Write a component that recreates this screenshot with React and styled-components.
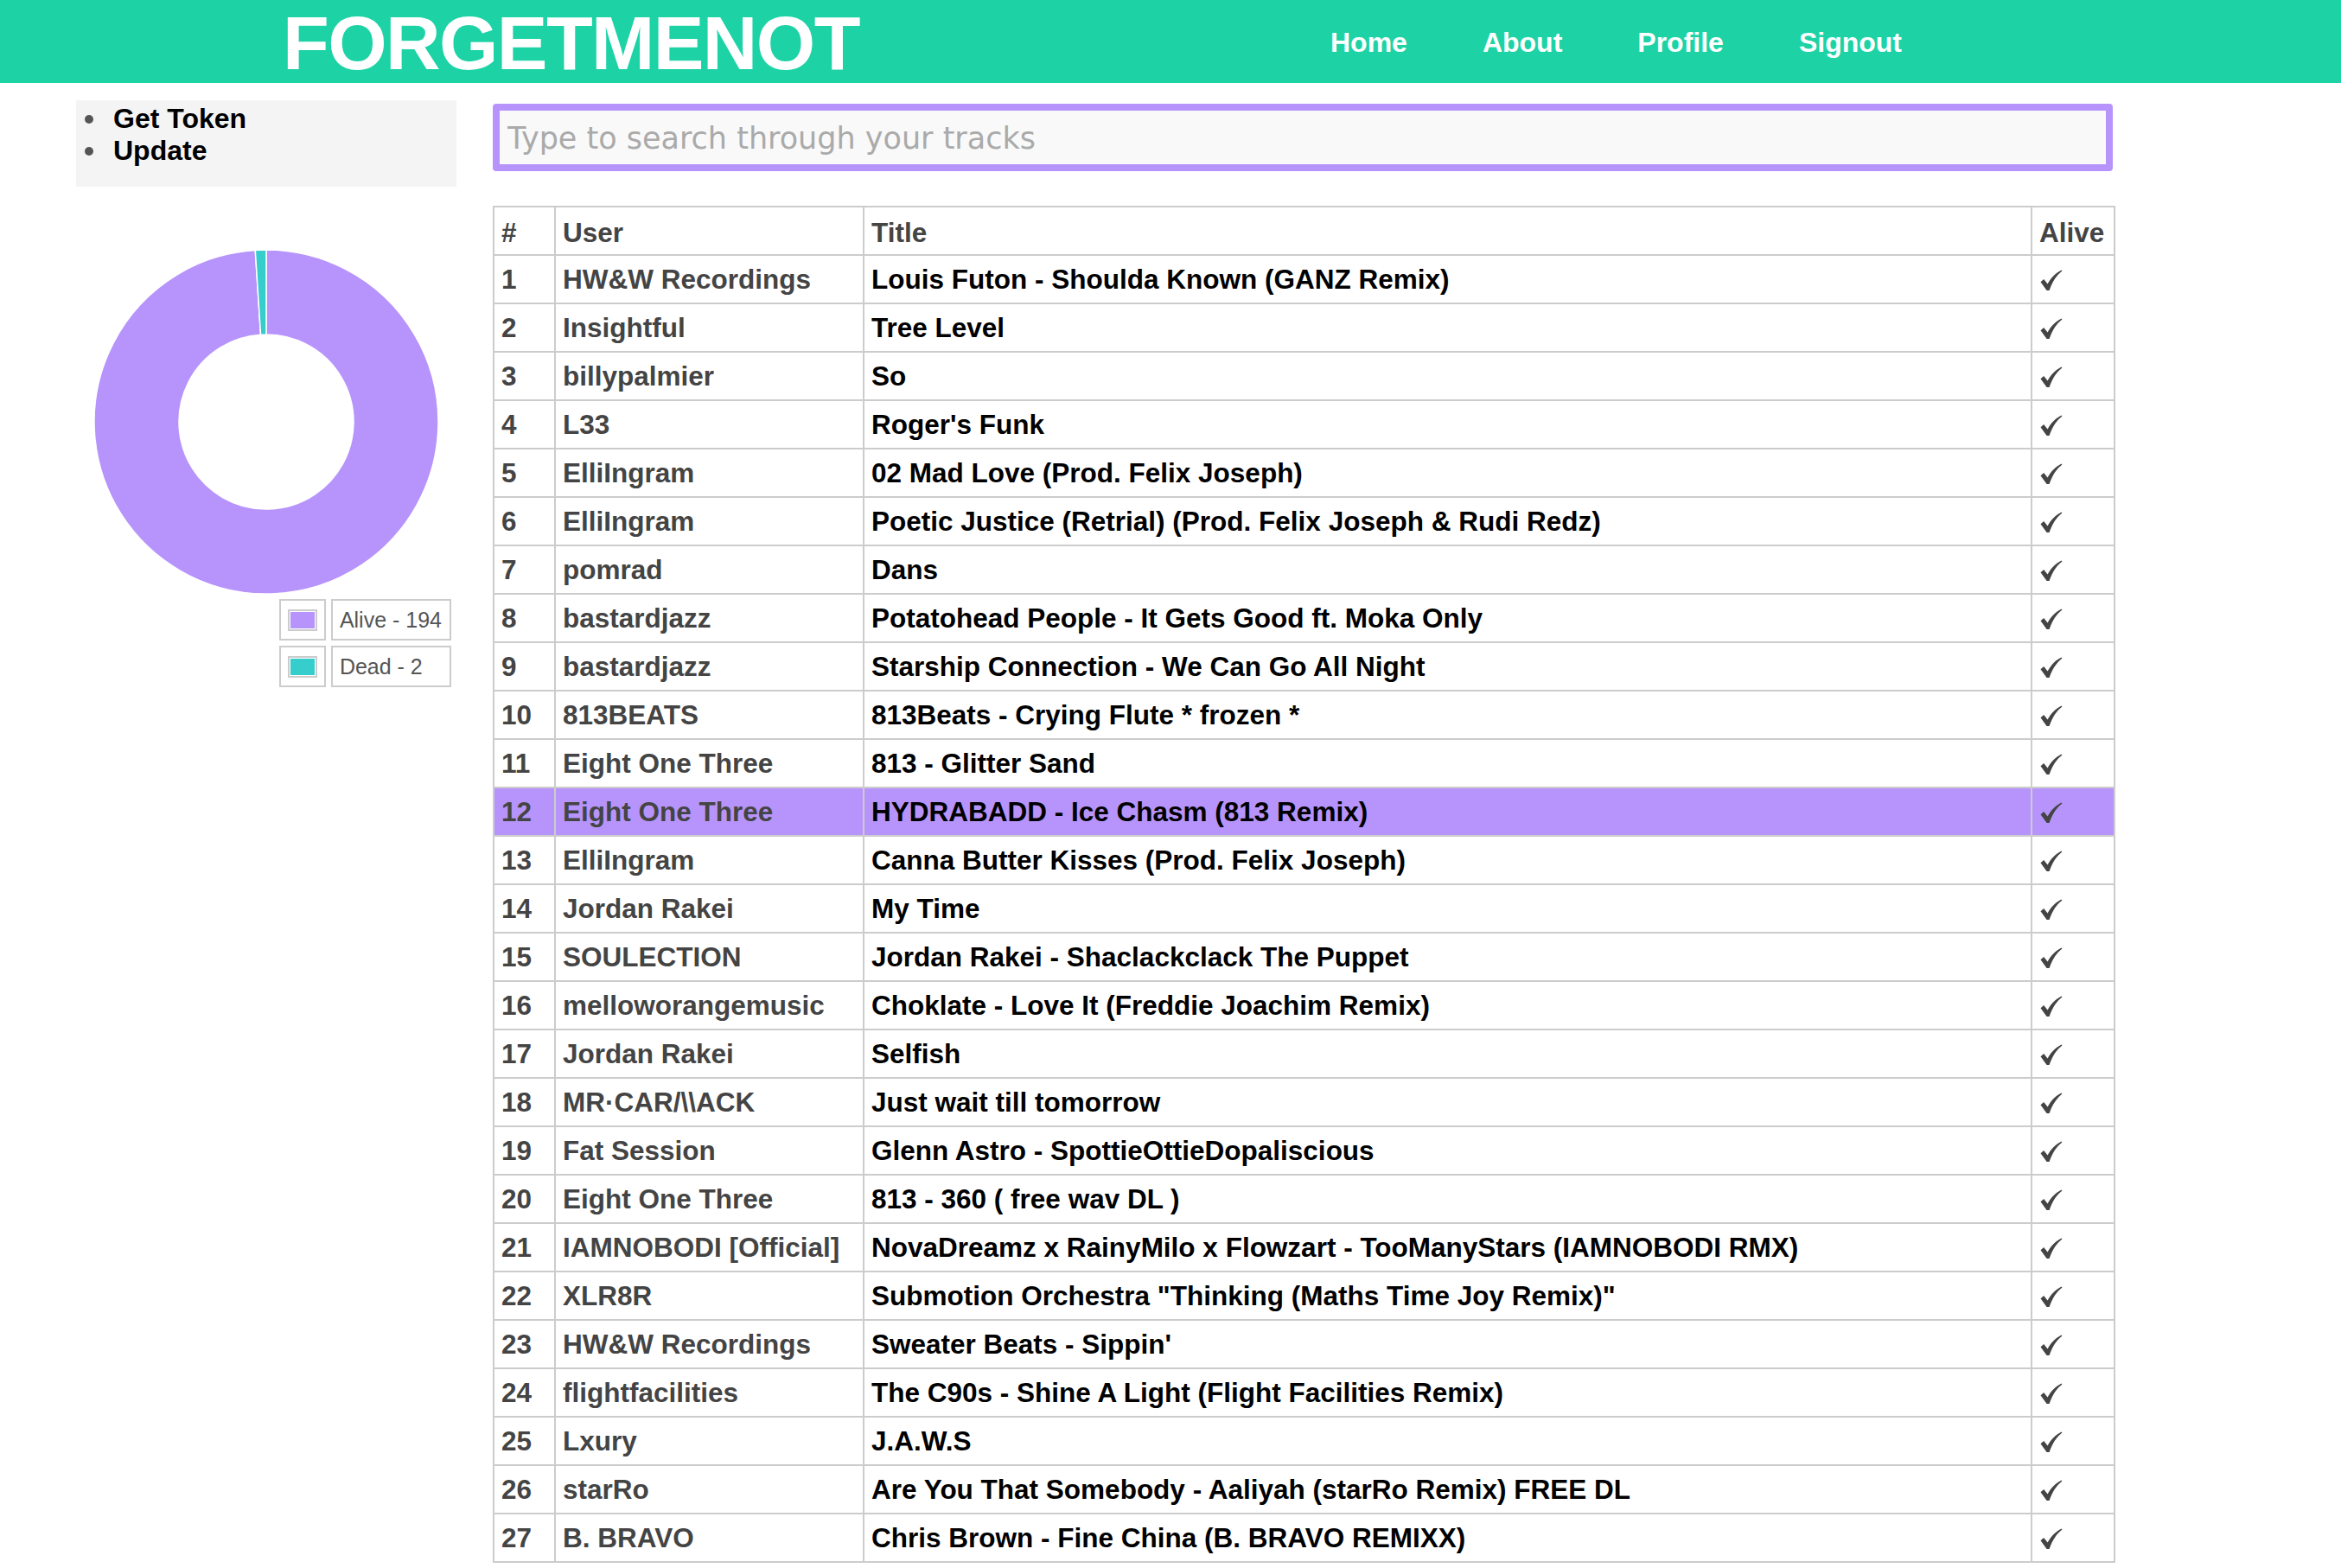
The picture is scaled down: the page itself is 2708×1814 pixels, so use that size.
import React, { useState } from 'react';
import styled, { createGlobalStyle } from 'styled-components';

const PURPLE = '#b794fb';
const TEAL = '#36cdcd';

const tracks = [
  ['HW&W Recordings', 'Louis Futon - Shoulda Known (GANZ Remix)'],
  ['Insightful', 'Tree Level'],
  ['billypalmier', 'So'],
  ['L33', "Roger's Funk"],
  ['ElliIngram', '02 Mad Love (Prod. Felix Joseph)'],
  ['ElliIngram', 'Poetic Justice (Retrial) (Prod. Felix Joseph & Rudi Redz)'],
  ['pomrad', 'Dans'],
  ['bastardjazz', 'Potatohead People - It Gets Good ft. Moka Only'],
  ['bastardjazz', 'Starship Connection - We Can Go All Night'],
  ['813BEATS', '813Beats - Crying Flute * frozen *'],
  ['Eight One Three', '813 - Glitter Sand'],
  ['Eight One Three', 'HYDRABADD - Ice Chasm (813 Remix)'],
  ['ElliIngram', 'Canna Butter Kisses (Prod. Felix Joseph)'],
  ['Jordan Rakei', 'My Time'],
  ['SOULECTION', 'Jordan Rakei - Shaclackclack The Puppet'],
  ['melloworangemusic', 'Choklate - Love It (Freddie Joachim Remix)'],
  ['Jordan Rakei', 'Selfish'],
  ['MR·CAR/\\\\ACK', 'Just wait till tomorrow'],
  ['Fat Session', 'Glenn Astro - SpottieOttieDopaliscious'],
  ['Eight One Three', '813 - 360 ( free wav DL )'],
  ['IAMNOBODI [Official]', 'NovaDreamz x RainyMilo x Flowzart - TooManyStars (IAMNOBODI RMX)'],
  ['XLR8R', 'Submotion Orchestra "Thinking (Maths Time Joy Remix)"'],
  ['HW&W Recordings', "Sweater Beats - Sippin'"],
  ['flightfacilities', 'The C90s - Shine A Light (Flight Facilities Remix)'],
  ['Lxury', 'J.A.W.S'],
  ['starRo', 'Are You That Somebody - Aaliyah (starRo Remix) FREE DL'],
  ['B. BRAVO', 'Chris Brown - Fine China (B. BRAVO REMIXX)'],
];

const stats = [
  { label: 'Alive', value: 194, color: PURPLE },
  { label: 'Dead', value: 2, color: TEAL },
];

const GlobalStyle = createGlobalStyle`
  html, body {
    margin: 0;
    padding: 0;
    background: #fff;
  }
  body {
    font-family: "Liberation Sans", Arial, Helvetica, sans-serif;
  }
  * {
    box-sizing: border-box;
  }
`;

const Header = styled.header`
  height: 96px;
  background: #1dd3a6;
  display: grid;
  grid-template-columns: 1212px auto;
  align-items: center;
  padding-left: 327px;
`;

const Logo = styled.a`
  font-size: 88px;
  line-height: 1;
  font-weight: 700;
  letter-spacing: -1.6px;
  color: #fff;
  text-decoration: none;
  margin-top: 3px;
`;

const Nav = styled.nav`
  display: flex;
  gap: 87px;
  margin-top: 2px;
`;

const NavLink = styled.a`
  font-size: 32px;
  font-weight: 700;
  color: #fff;
  text-decoration: none;
  cursor: pointer;
`;

const Page = styled.div`
  display: flex;
  align-items: flex-start;
  gap: 42px;
  padding: 20px 0 0 88px;
`;

const Sidebar = styled.aside`
  width: 440px;
  flex: none;
`;

const Menu = styled.ul`
  margin: 0;
  padding: 3px 0 23px 10px;
  background: #f4f4f4;
  list-style: none;
`;

const MenuItem = styled.li`
  display: flex;
  align-items: center;
  font-size: 32px;
  line-height: 37px;
  font-weight: 700;
  color: #000;
  cursor: pointer;
  &::before {
    content: '';
    width: 10px;
    height: 10px;
    border-radius: 50%;
    background: #555;
    margin-right: 23px;
  }
`;

const ChartBox = styled.div`
  margin-top: 72px;
  height: 400px;
  display: flex;
  justify-content: center;
`;

const Legend = styled.table`
  margin-left: auto;
  margin-top: -1px;
  border-collapse: separate;
  border-spacing: 6px;
`;

const LegendCell = styled.td`
  border: 2px solid #ccc;
  padding: ${(p) => (p.$swatch ? '10px 8px 9px' : '0 9px 0 8px')};
  line-height: ${(p) => (p.$swatch ? '0' : 'normal')};
  font-size: 25px;
  color: #555;
  vertical-align: middle;
`;

const Swatch = styled.span`
  display: block;
  width: 34px;
  height: 25px;
  border: 2px solid #ccc;
  padding: 1px;
  background: ${(p) => p.$color};
  background-clip: content-box;
`;

const Main = styled.main`
  width: 1877px;
  flex: none;
  padding-top: 4px;
`;

const Search = styled.input`
  display: block;
  width: 1874px;
  height: 78px;
  border: 8px solid ${PURPLE};
  border-radius: 4px;
  background: #f9f9f9;
  padding: 2px 9px 0;
  font-family: "DejaVu Sans", Verdana, sans-serif;
  font-size: 35px;
  color: #333;
  outline: none;
  &::placeholder {
    color: #aaa;
  }
`;

const Tracks = styled.table`
  margin-top: 40px;
  width: 1877px;
  border-collapse: collapse;
  table-layout: fixed;
  border: 2px solid #ccc;
`;

const Col = styled.col`
  width: ${(p) => p.$w}px;
`;

const Row = styled.tr`
  height: 56px;
  background: ${(p) => (p.$active ? PURPLE : 'transparent')};
  cursor: pointer;
`;

const HeadCell = styled.th`
  border: 2px solid #ccc;
  padding: 4px 8px 0;
  text-align: left;
  font-size: 31.5px;
  font-weight: 700;
  color: #444;
  white-space: nowrap;
`;

const Cell = styled.td`
  border: 2px solid #ccc;
  padding: 0 8px;
  font-size: 31.5px;
  font-weight: 700;
  color: ${(p) => (p.$strong ? '#000' : '#444')};
  white-space: nowrap;
  overflow: hidden;
  vertical-align: middle;
`;

const CheckIcon = styled.svg`
  display: block;
  width: 26px;
  height: 25px;
  margin: 2px 0 0 1px;
  fill: #444;
`;

const Check = () => (
  <CheckIcon viewBox="0 0 26 25">
    <path d="M0.5 14.2 L4.2 11 L8.6 16.6 C12.4 9.4 17.6 3.8 24.6 0.4 L25.4 1.6 C19.2 6.4 14.2 13.6 10.6 24 L7.6 24 Z" />
  </CheckIcon>
);

const polar = (r, deg) => {
  const a = (deg * Math.PI) / 180;
  return [200 + r * Math.sin(a), 200 - r * Math.cos(a)];
};

const slicePath = (start, end, R, r) => {
  const [x1, y1] = polar(R, start);
  const [x2, y2] = polar(R, end);
  const [x3, y3] = polar(r, end);
  const [x4, y4] = polar(r, start);
  const large = end - start > 180 ? 1 : 0;
  return `M${x1} ${y1} A${R} ${R} 0 ${large} 1 ${x2} ${y2} L${x3} ${y3} A${r} ${r} 0 ${large} 0 ${x4} ${y4}Z`;
};

const Donut = ({ data }) => {
  const total = data.reduce((s, d) => s + d.value, 0);
  let angle = 0;
  return (
    <svg width="400" height="400" viewBox="0 0 400 400">
      {data.map((d) => {
        const start = angle;
        angle += (d.value / total) * 360;
        return (
          <path
            key={d.label}
            d={slicePath(start, angle, 199, 101)}
            fill={d.color}
            stroke="#fff"
            strokeWidth="1.5"
          />
        );
      })}
    </svg>
  );
};

const App = () => {
  const [active, setActive] = useState(11);

  return (
    <>
      <GlobalStyle />
      <Header>
        <Logo>FORGETMENOT</Logo>
        <Nav>
          <NavLink>Home</NavLink>
          <NavLink>About</NavLink>
          <NavLink>Profile</NavLink>
          <NavLink>Signout</NavLink>
        </Nav>
      </Header>
      <Page>
        <Sidebar>
          <Menu>
            <MenuItem>Get Token</MenuItem>
            <MenuItem>Update</MenuItem>
          </Menu>
          <ChartBox>
            <Donut data={stats} />
          </ChartBox>
          <Legend>
            <tbody>
              {stats.map((s) => (
                <tr key={s.label}>
                  <LegendCell $swatch>
                    <Swatch $color={s.color} />
                  </LegendCell>
                  <LegendCell>
                    {s.label} - {s.value}
                  </LegendCell>
                </tr>
              ))}
            </tbody>
          </Legend>
        </Sidebar>
        <Main>
          <Search placeholder="Type to search through your tracks" />
          <Tracks>
            <colgroup>
              <Col $w={71} />
              <Col $w={357} />
              <Col $w={1351} />
              <Col $w={96} />
            </colgroup>
            <thead>
              <Row>
                <HeadCell>#</HeadCell>
                <HeadCell>User</HeadCell>
                <HeadCell>Title</HeadCell>
                <HeadCell>Alive</HeadCell>
              </Row>
            </thead>
            <tbody>
              {tracks.map(([user, title], i) => (
                <Row key={i} $active={i === active} onClick={() => setActive(i)}>
                  <Cell>{i + 1}</Cell>
                  <Cell>{user}</Cell>
                  <Cell $strong>{title}</Cell>
                  <Cell>
                    <Check />
                  </Cell>
                </Row>
              ))}
            </tbody>
          </Tracks>
        </Main>
      </Page>
    </>
  );
};

export default App;
